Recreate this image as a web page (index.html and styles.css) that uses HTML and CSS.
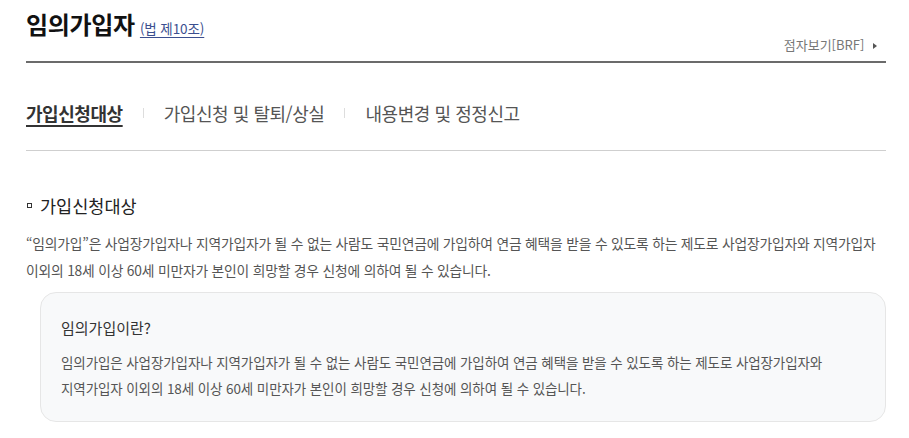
FILE: index.html
```html
<!DOCTYPE html>
<html lang="ko">
<head>
  <meta charset="UTF-8">
  <meta name="viewport" content="width=device-width, initial-scale=1.0">
  <title>임의가입자</title>
  <link rel="stylesheet" href="styles.css">
</head>
<body>
  <div class="wrap">
    <div class="page-head">
      <h1 class="page-title">임의가입자<a href="#" class="law-link">(법 제10조)</a></h1>
      <a href="#" class="brf">점자보기[BRF] <span class="arrow"></span></a>
    </div>

    <ul class="tabs">
      <li class="on"><a href="#">가입신청대상</a></li>
      <li><a href="#">가입신청 및 탈퇴/상실</a></li>
      <li><a href="#">내용변경 및 정정신고</a></li>
    </ul>

    <div class="section">
      <h2 class="sec-title">가입신청대상</h2>
      <p class="sec-text">“임의가입”은 사업장가입자나 지역가입자가 될 수 없는 사람도 국민연금에 가입하여 연금 혜택을 받을 수 있도록 하는 제도로 사업장가입자와 지역가입자 이외의 18세 이상 60세 미만자가 본인이 희망할 경우 신청에 의하여 될 수 있습니다.</p>

      <div class="info-box">
        <h3 class="box-title">임의가입이란?</h3>
        <p class="box-text">임의가입은 사업장가입자나 지역가입자가 될 수 없는 사람도 국민연금에 가입하여 연금 혜택을 받을 수 있도록 하는 제도로 사업장가입자와<br>지역가입자 이외의 18세 이상 60세 미만자가 본인이 희망할 경우 신청에 의하여 될 수 있습니다.</p>
      </div>
    </div>
  </div>
</body>
</html>
```

FILE: styles.css
```css
body {
  margin: 0;
  font-family: "Noto Sans CJK KR", "Noto Sans", sans-serif;
  color: #333;
  background: #fff;
  word-break: keep-all;
}

a {
  text-decoration: none;
  color: inherit;
}

.wrap {
  width: 860px;
  margin-left: 26px;
}

.page-head {
  display: flex;
  justify-content: space-between;
  align-items: flex-end;
  padding: 6px 0 6px;
  border-bottom: 2px solid #6b6b6b;
}

.page-title {
  margin: 0 0 9px;
  font-size: 24px;
  font-weight: 700;
  color: #111;
  line-height: 36px;
  letter-spacing: -0.3px;
}

.law-link {
  font-size: 13.5px;
  font-weight: 400;
  color: #3b4f8f;
  text-decoration: underline;
  text-underline-offset: 3px;
  letter-spacing: -0.1px;
  margin-left: 5px;
}

.brf {
  font-size: 13px;
  color: #777;
  line-height: 18px;
  padding-right: 9px;
  margin-bottom: 1px;
}

.arrow {
  display: inline-block;
  margin-left: 5px;
  width: 0;
  height: 0;
  border-top: 3px solid transparent;
  border-bottom: 3px solid transparent;
  border-left: 4px solid #555;
  vertical-align: 1px;
}

.tabs {
  display: flex;
  list-style: none;
  margin: 0;
  padding: 37px 0 24px;
  border-bottom: 1px solid #cfcfcf;
}

.tabs li {
  font-size: 18px;
  line-height: 26px;
  color: #555;
  display: flex;
  align-items: center;
  letter-spacing: -0.45px;
}

.tabs li + li::before {
  content: "";
  width: 1px;
  height: 10px;
  background: #ddd;
  margin: 0 20px;
}

.tabs li.on a {
  font-weight: 700;
  color: #333;
  text-decoration: underline;
  text-underline-offset: 4px;
  text-decoration-thickness: 2px;
}

.section {
  padding-top: 42px;
}

.sec-title {
  position: relative;
  margin: 0 0 11px;
  padding-left: 14px;
  font-size: 17.5px;
  font-weight: 400;
  color: #222;
  line-height: 26px;
}

.sec-title::before {
  content: "";
  position: absolute;
  left: 1px;
  top: 10px;
  width: 3px;
  height: 3px;
  border: 1px solid #333;
}

.sec-text {
  margin: 0;
  font-size: 13.8px;
  line-height: 27px;
  color: #555;
  letter-spacing: -0.2px;
}

.info-box {
  margin: 8px 0 0 14px;
  padding: 23px 20px 20px;
  background: #f8f9fa;
  border: 1px solid #e6e6e6;
  border-radius: 16px;
}

.box-title {
  margin: 0 0 9px;
  font-size: 15px;
  font-weight: 400;
  color: #333;
  line-height: 24px;
}

.box-text {
  margin: 0;
  font-size: 13.5px;
  line-height: 26px;
  color: #555;
  letter-spacing: -0.1px;
}
```
